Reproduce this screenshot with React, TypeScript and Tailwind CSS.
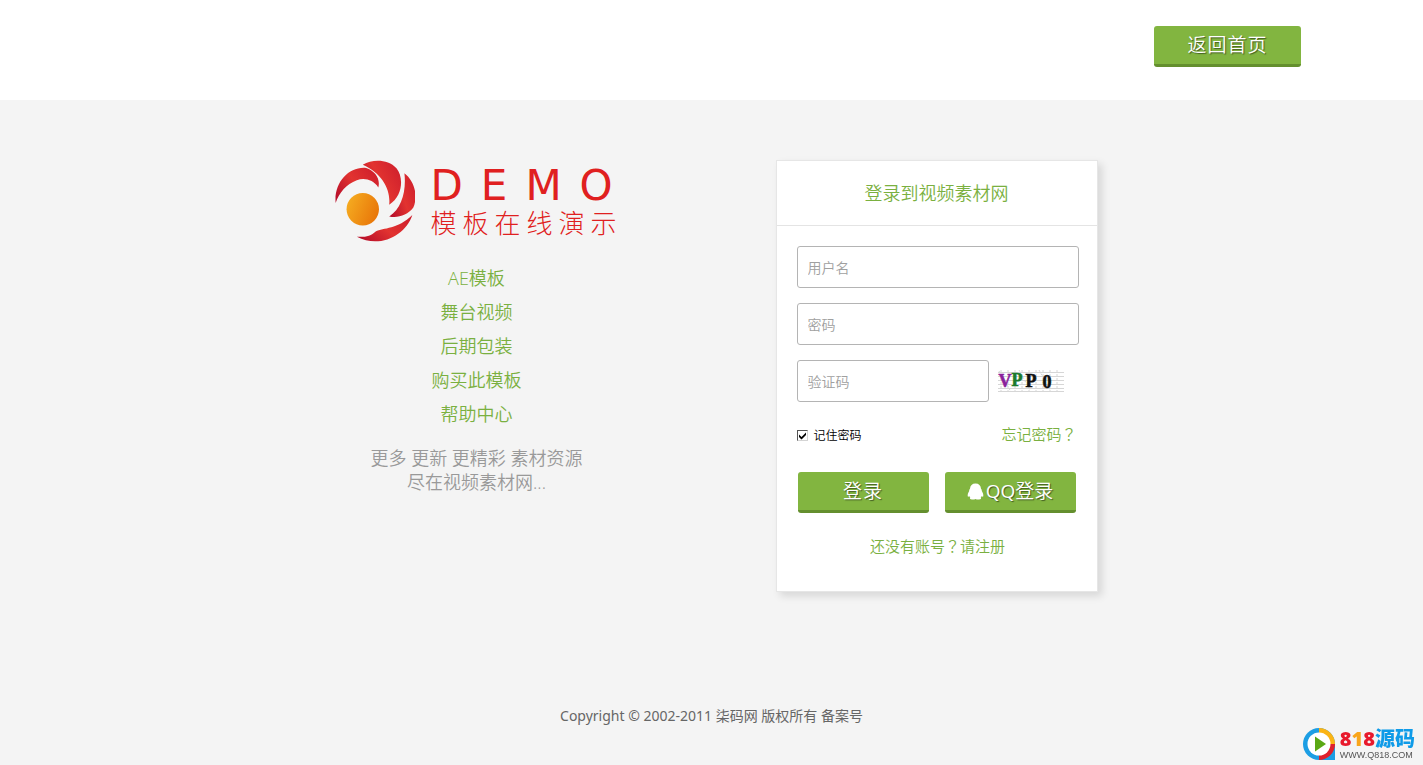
import { useState } from 'react';
import type { ReactNode } from 'react';

const categories = [
  { label: 'AE模板', href: '#ae' },
  { label: '舞台视频', href: '#stage' },
  { label: '后期包装', href: '#post' },
  { label: '购买此模板', href: '#buy' },
  { label: '帮助中心', href: '#help' },
];

const inputClass =
  'h-[42px] rounded-[3px] border border-[#b4b4b4] bg-white px-2.5 text-sm text-[#333] outline-none placeholder:text-[#a0a0a0] focus:border-[#82b540]';

function GreenButton({
  children,
  type = 'button',
  className = '',
}: {
  children: ReactNode;
  type?: 'button' | 'submit';
  className?: string;
}) {
  return (
    <button
      type={type}
      className={`flex h-[41px] items-center justify-center rounded-[3px] border-b-[3px] border-[#648f2e] bg-[#82b540] text-[19px] text-white cursor-pointer [text-shadow:1px_1px_1px_rgba(0,0,0,0.5)] hover:bg-[#8cc04a] ${className}`}
    >
      {children}
    </button>
  );
}

// Full-width question mark, centred in its cell
function QuestionMark() {
  return <span className="font-['Noto_Sans_CJK_TC',sans-serif]">？</span>;
}

function BrandLogo() {
  return (
    <div className="flex items-start gap-4 text-[#e02020]">
      <svg viewBox="30 24 242 246" className="h-[82px] w-20 shrink-0" aria-hidden="true">
        <defs>
          <linearGradient id="petal" x1="0" y1="0.8" x2="1" y2="0.2">
            <stop offset="0" stopColor="#b80f2a" />
            <stop offset="0.5" stopColor="#e23330" />
            <stop offset="1" stopColor="#cf1f2c" />
          </linearGradient>
          <linearGradient id="sun" x1="0" y1="0.3" x2="1" y2="0.7">
            <stop offset="0" stopColor="#f5ab20" />
            <stop offset="1" stopColor="#e87408" />
          </linearGradient>
        </defs>
        <g fill="url(#petal)">
          <path d="M32 153C26 92 72 42 124 47C152 56 168 80 161 106C146 83 120 76 96 84C64 96 42 122 32 153Z" />
          <path d="M114 37C144 20 190 20 216 48C238 74 236 132 194 158C199 112 172 62 114 37Z" />
          <path d="M240 63C270 86 282 130 267 167C250 190 220 200 194 194C232 170 246 117 240 63Z" />
          <path d="M264 189C244 250 166 292 96 255C120 257 139 253 153 239C177 227 219 233 264 189Z" />
        </g>
        <circle cx="114" cy="172" r="49" fill="url(#sun)" />
      </svg>
      <div className="w-[188px] pt-1">
        <div className="font-['DejaVu_Sans',sans-serif] text-[42px] leading-[44px] font-normal tracking-[18px] whitespace-nowrap">
          DEMO
        </div>
        <div className="text-[26px] leading-[30px] font-light tracking-[6px] whitespace-nowrap">
          模板在线演示
        </div>
      </div>
    </div>
  );
}

function Captcha() {
  return (
    <svg width="68" height="24" viewBox="0 0 68 24" role="img" aria-label="验证码图片">
      <g stroke="#d6d6d6" strokeWidth="1">
        <path d="M1 3.5H67M1 7.5H67M1 11.5H67M1 15.5H67M1 19.5H67M1 22.5H67" />
        <path
          d="M4 1V23M11 1V23M18 1V23M25 1V23M32 1V23M39 1V23M46 1V23M53 1V23M60 1V23M2 2L14 23M22 1L34 23M42 1L54 23"
          strokeDasharray="2 2"
        />
      </g>
      <g
        fontFamily="'Liberation Serif', serif"
        fontWeight="700"
        fontSize="18"
        strokeWidth="0.6"
        textAnchor="middle"
      >
        <text x="8" y="18" fill="#8a1f9c" stroke="#8a1f9c">V</text>
        <text x="20" y="17" fill="#1c7a2c" stroke="#1c7a2c">P</text>
        <text x="34" y="18" fill="#111" stroke="#111">P</text>
        <text x="50" y="19" fill="#111" stroke="#111">0</text>
      </g>
    </svg>
  );
}

function LoginCard() {
  const [remember, setRemember] = useState(true);

  return (
    <div className="w-[322px] border border-[#e6e6e6] bg-white shadow-[4px_4px_8px_rgba(0,0,0,0.12)]">
      <h1 className="h-[65px] border-b border-[#e4e4e4] text-center text-lg leading-[64px] text-[#7ab040]">
        登录到视频素材网
      </h1>
      <form className="pt-5 pr-[18px] pb-[33px] pl-5" onSubmit={(e) => e.preventDefault()}>
        <div className="flex flex-col gap-[15px]">
          <input aria-label="用户名" placeholder="用户名" className={`w-full ${inputClass}`} />
          <input
            type="password"
            aria-label="密码"
            placeholder="密码"
            className={`w-full ${inputClass}`}
          />
          <div className="flex items-center gap-2">
            <input aria-label="验证码" placeholder="验证码" className={`w-48 ${inputClass}`} />
            <Captcha />
          </div>
        </div>

        <div className="mt-[22px] flex h-[23px] items-center justify-between pr-0.5">
          <label className="flex items-center gap-1.5 text-xs text-black">
            <span className="grid">
              <input
                type="checkbox"
                checked={remember}
                onChange={(e) => setRemember(e.target.checked)}
                className="peer col-start-1 row-start-1 h-[11px] w-[11px] appearance-none border border-t-[#555] border-l-[#555] border-r-[#d4d4d4] border-b-[#d4d4d4] bg-white"
              />
              <svg
                viewBox="0 0 11 11"
                className="pointer-events-none invisible col-start-1 row-start-1 h-[11px] w-[11px] peer-checked:visible"
                aria-hidden="true"
              >
                <path d="M2 4.5L4.5 7L9 2.5V5L4.5 9.5L2 7Z" fill="#000" />
              </svg>
            </span>
            记住密码
          </label>
          <a
            href="#forgot"
            className="self-start text-[15px] leading-5 text-[#7ab040] hover:underline"
          >
            忘记密码
            <QuestionMark />
          </a>
        </div>

        <div className="mt-[25px] flex gap-4 pl-px pr-[3px]">
          <GreenButton type="submit" className="flex-1 tracking-[1px]">
            登录
          </GreenButton>
          <GreenButton className="flex-1 gap-0.5">
            <svg viewBox="0 0 17 17" className="h-[17px] w-[17px]" fill="currentColor" aria-hidden="true">
              <path d="M8.500 0.500C11.800 0.500 13.800 2.500 14 5.800C14.700 6.600 14.900 7.400 14.800 8C16 9.800 16.600 12 16.200 13.600C15.800 14 15.100 13.400 14.700 12.900C14.500 13.700 14.200 14.200 13.700 14.700C14.600 15.200 14 16.400 12 16.500C10.500 16.600 9.300 16.300 8.500 15.900C7.700 16.300 6.500 16.600 5 16.500C3 16.400 2.400 15.200 3.300 14.700C2.800 14.200 2.500 13.700 2.300 12.900C1.900 13.400 1.200 14 0.800 13.600C0.400 12 1 9.800 2.200 8C2.100 7.400 2.300 6.600 3 5.800C3.200 2.500 5.200 0.500 8.500 0.500Z" />
            </svg>
            <span>
              <span className="font-normal">QQ</span>登录
            </span>
          </GreenButton>
        </div>

        <p className="mt-[21px] text-center text-[15px] leading-[23px]">
          <a href="#register" className="text-[#7ab040] hover:underline">
            还没有账号
            <QuestionMark />
            请注册
          </a>
        </p>
      </form>
    </div>
  );
}

function SiteBadge() {
  return (
    <a href="#source" className="fixed right-2 bottom-1 flex items-center gap-1">
      <svg viewBox="0 0 34 34" className="h-[34px] w-[34px]" aria-hidden="true">
        <path d="M17 17H33V33H17Z" fill="#1c9ee4" />
        <circle cx="17" cy="17" r="16" fill="#1c9ee4" />
        <path d="M17 17V1A16 16 0 0 1 33 17Z" fill="#fbb415" />
        <path d="M17 17H33A16 16 0 0 1 17 33Z" fill="#e0202c" />
        <circle cx="17" cy="17" r="11.5" fill="#fff" />
        <path d="M13 9.500L24 17L13 24.500Z" fill="#5aa814" />
      </svg>
      <span className="block">
        <span className="block font-['Open_Sans','Noto_Sans_CJK_SC',sans-serif] text-xl leading-[22px] font-extrabold text-[#0f9be8]">
          <span className="text-[#e8192c]">8</span>
          <span className="text-[#f9a51a]">1</span>
          <span className="text-[#e8192c]">8</span>
          源码
        </span>
        <span className="block font-['Liberation_Sans',sans-serif] text-[9px] leading-[10px] font-normal text-[#555]">
          WWW.Q818.COM
        </span>
      </span>
    </a>
  );
}

export default function App() {
  return (
    <div className="flex min-h-screen flex-col bg-[#f4f4f4] font-['Open_Sans','Noto_Sans_CJK_SC',sans-serif] font-[350]">
      <header className="h-[100px] bg-white">
        <div className="mx-auto flex max-w-[1179px] justify-end pt-[26px]">
          <GreenButton className="w-[147px] tracking-[1px]">返回首页</GreenButton>
        </div>
      </header>

      <main className="mx-auto grid w-full max-w-[940px] flex-1 grid-cols-2 items-start pt-[60px]">
        <section className="flex flex-col items-center">
          <BrandLogo />
          <nav className="mt-[19px] flex flex-col items-center text-lg leading-[34px] text-[#7ab040]">
            {categories.map((item) => (
              <a key={item.href} href={item.href} className="hover:underline">
                {item.label}
              </a>
            ))}
          </nav>
          <p className="mt-[15px] text-center text-lg leading-6 text-[#999]">
            更多 更新 更精彩 素材资源
            <br />
            尽在视频素材网...
          </p>
        </section>

        <section className="pl-16">
          <LoginCard />
        </section>
      </main>

      <footer className="pb-[39px] text-center font-['Noto_Sans','Noto_Sans_CJK_SC',sans-serif] text-sm leading-5 font-normal text-[#666]">
        Copyright © 2002-2011 柒码网 版权所有 备案号
      </footer>

      <SiteBadge />
    </div>
  );
}
